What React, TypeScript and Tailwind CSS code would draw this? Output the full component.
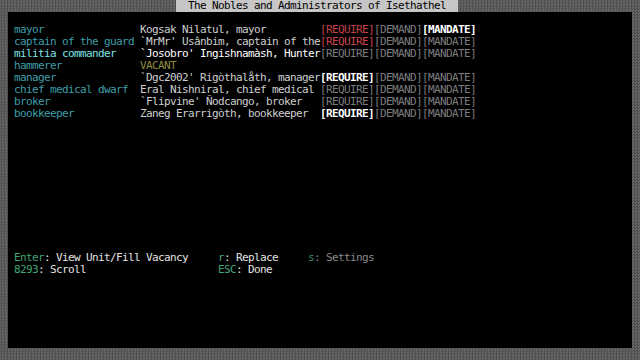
import React from "react";

type Level = "red" | "white" | "gray";

const nobles: {
  role: string;
  name: string;
  hot?: boolean;
  vacant?: boolean;
  marks?: [Level, Level, Level];
}[] = [
  { role: "mayor", name: "Kogsak Nilatul, mayor", marks: ["red", "gray", "white"] },
  { role: "captain of the guard", name: "`MrMr' Usânbim, captain of the", marks: ["red", "gray", "gray"] },
  { role: "militia commander", name: "`Josobro' Ingishnamàsh, Hunter", hot: true, marks: ["gray", "gray", "gray"] },
  { role: "hammerer", name: "VACANT", vacant: true },
  { role: "manager", name: "`Dgc2002' Rigòthalåth, manager", marks: ["white", "gray", "gray"] },
  { role: "chief medical dwarf", name: "Eral Nishniral, chief medical", marks: ["gray", "gray", "gray"] },
  { role: "broker", name: "`Flipvine' Ñodcango, broker", marks: ["gray", "gray", "gray"] },
  { role: "bookkeeper", name: "Zaneg Erarrigòth, bookkeeper", marks: ["white", "gray", "gray"] },
];

const levelColor: Record<Level, string> = {
  red: "text-[#c8404c]",
  white: "text-white font-bold",
  gray: "text-[#7c7c7c]",
};

const labels = ["[REQUIRE]", "[DEMAND]", "[MANDATE]"];

export default function App() {
  return (
    <div className="w-[640px] h-[360px] flex flex-col bg-[repeating-conic-gradient(#4f4f4f_0_25%,#686868_0_50%)] bg-[length:3px_3px] font-['DejaVu_Sans_Mono','Liberation_Mono',monospace] text-[11px] leading-[12px] tracking-[-0.62px] whitespace-pre">
      <div className="h-[12px] flex pl-[176px]">
        <div className="h-[12px] w-[282px] bg-[#c6c6c6] text-black px-[12px]">
          The Nobles and Administrators of Isethathel
        </div>
      </div>

      <div className="flex-1 mx-[8px] mb-[12px] bg-black flex flex-col pt-[12px] pl-[6px]">
        {nobles.map((n) => (
          <div key={n.role} className="flex h-[12px]">
            <div className={`w-[126px] ${n.hot ? "text-[#7fe3e6]" : "text-[#3f9ea8]"}`}>{n.role}</div>
            <div
              className={`w-[180px] ${
                n.vacant ? "text-[#8e8c3e]" : n.hot ? "text-white" : "text-[#cfcfcf]"
              }`}
            >
              {n.name}
            </div>
            {n.marks && (
              <div className="flex">
                {n.marks.map((m, i) => (
                  <span key={i} className={levelColor[m]}>
                    {labels[i]}
                  </span>
                ))}
              </div>
            )}
          </div>
        ))}

        <div className="mt-[132px] flex flex-col">
          <div className="flex h-[12px]">
            <div className="w-[204px] text-[#e4e4e4]">
              <span className="text-[#3fa574]">Enter</span>: View Unit/Fill Vacancy
            </div>
            <div className="w-[90px] text-[#e4e4e4]">
              <span className="text-[#3fa574]">r</span>: Replace
            </div>
            <div className="text-[#8a8a8a]">
              <span className="text-[#3f8a68]">s</span>: Settings
            </div>
          </div>
          <div className="flex h-[12px]">
            <div className="w-[204px] text-[#e4e4e4]">
              <span className="text-[#3fa574]">8293</span>: Scroll
            </div>
            <div className="text-[#e4e4e4]">
              <span className="text-[#3fa574]">ESC</span>: Done
            </div>
          </div>
        </div>
      </div>
    </div>
  );
}
